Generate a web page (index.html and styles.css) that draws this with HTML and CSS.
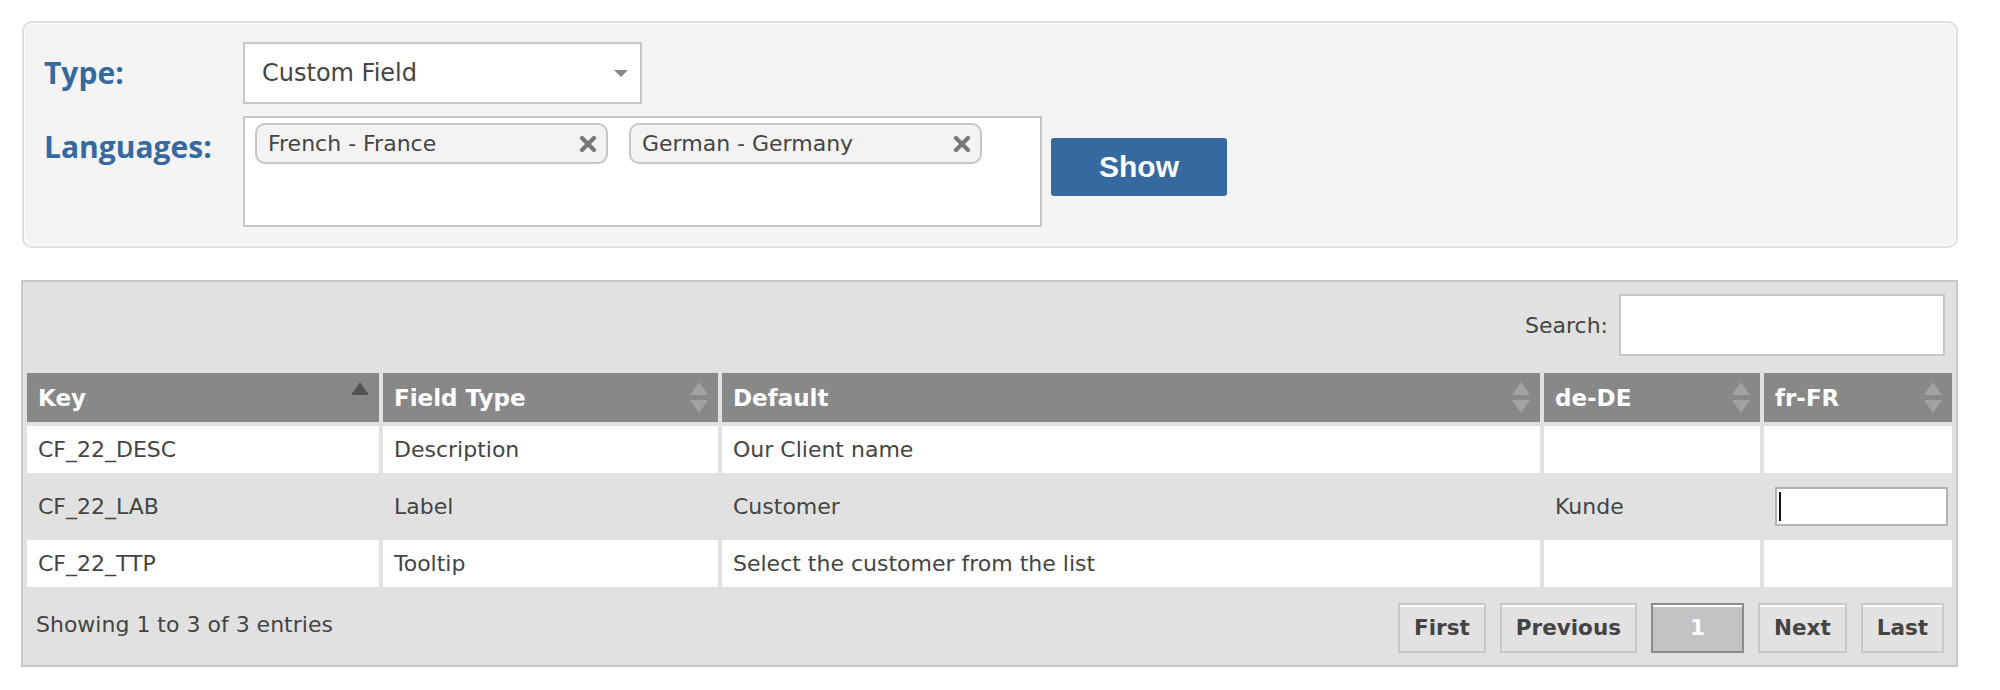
FILE: index.html
```html
<!DOCTYPE html>
<html>
<head>
<meta charset="utf-8">
<title>Translations</title>
<link rel="stylesheet" href="styles.css">
</head>
<body>
<div class="page">
  <div class="filter-panel">
    <div class="form-row">
      <div class="form-label">Type:</div>
      <div class="select-box"><span class="select-value">Custom Field</span><span class="select-arrow"></span></div>
    </div>
    <div class="form-row">
      <div class="form-label">Languages:</div>
      <div class="multi-box">
        <div class="tag"><span class="tag-text">French - France</span><svg class="tag-x" width="18" height="18" viewBox="0 0 18 18"><path d="M3 3 L15 15 M15 3 L3 15" stroke="#777" stroke-width="4.2" stroke-linecap="round"/></svg></div>
        <div class="tag"><span class="tag-text">German - Germany</span><svg class="tag-x" width="18" height="18" viewBox="0 0 18 18"><path d="M3 3 L15 15 M15 3 L3 15" stroke="#777" stroke-width="4.2" stroke-linecap="round"/></svg></div>
      </div>
      <button class="show-btn">Show</button>
    </div>
  </div>

  <div class="table-panel">
    <div class="search-row">
      <label class="search-label">Search:</label>
      <input class="search-input" type="text">
    </div>
    <table class="data-table">
      <colgroup>
        <col class="c-key"><col class="c-type"><col class="c-default"><col class="c-de"><col class="c-fr">
      </colgroup>
      <thead>
        <tr>
          <th><div class="th-inner"><span>Key</span><svg class="sort" width="18" height="31" viewBox="0 0 18 31"><path d="M0 13 L9 0 L18 13 Z" fill="#555"/></svg></div></th>
          <th><div class="th-inner"><span>Field Type</span><svg class="sort" width="18" height="31" viewBox="0 0 18 31"><path d="M0 13 L9 0 L18 13 Z M0 18 L18 18 L9 31 Z" fill="#a2a2a2"/></svg></div></th>
          <th><div class="th-inner"><span>Default</span><svg class="sort" width="18" height="31" viewBox="0 0 18 31"><path d="M0 13 L9 0 L18 13 Z M0 18 L18 18 L9 31 Z" fill="#a2a2a2"/></svg></div></th>
          <th><div class="th-inner"><span>de-DE</span><svg class="sort" width="18" height="31" viewBox="0 0 18 31"><path d="M0 13 L9 0 L18 13 Z M0 18 L18 18 L9 31 Z" fill="#a2a2a2"/></svg></div></th>
          <th><div class="th-inner"><span>fr-FR</span><svg class="sort" width="18" height="31" viewBox="0 0 18 31"><path d="M0 13 L9 0 L18 13 Z M0 18 L18 18 L9 31 Z" fill="#a2a2a2"/></svg></div></th>
        </tr>
      </thead>
      <tbody>
        <tr class="odd">
          <td>CF_22_DESC</td><td>Description</td><td>Our Client name</td><td></td><td></td>
        </tr>
        <tr class="even">
          <td>CF_22_LAB</td><td>Label</td><td>Customer</td><td>Kunde</td><td><div class="edit-box"><span class="caret"></span></div></td>
        </tr>
        <tr class="odd">
          <td>CF_22_TTP</td><td>Tooltip</td><td>Select the customer from the list</td><td></td><td></td>
        </tr>
      </tbody>
    </table>
    <div class="table-footer">
      <div class="info">Showing 1 to 3 of 3 entries</div>
      <div class="paging">
        <span class="page-btn">First</span>
        <span class="page-btn">Previous</span>
        <span class="page-btn current">1</span>
        <span class="page-btn">Next</span>
        <span class="page-btn">Last</span>
      </div>
    </div>
  </div>
</div>
</body>
</html>
```
FILE: styles.css
```css
* { box-sizing: border-box; }
html, body { margin: 0; padding: 0; background: #fff; }
body { font-family: "DejaVu Sans", Verdana, sans-serif; color: #444; }

.page { width: 1937px; margin-left: 21px; padding-top: 21px; }

.filter-panel {
  margin-left: 1px;
  background: #f4f4f4;
  border: 2px solid #dedede;
  border-radius: 10px;
  box-shadow: inset 0 0 0 1px #fff;
  padding: 19px 20px;
  display: flex;
  flex-direction: column;
  gap: 12px;
}
.form-row { display: flex; align-items: flex-start; }
.form-label {
  width: 199px;
  font-family: "Open Sans", sans-serif;
  font-weight: 700;
  font-size: 30px;
  line-height: 62px;
  color: #35699f;
}
.select-box {
  width: 399px;
  height: 62px;
  background: #fff;
  border: 2px solid #c6c6c6;
  padding: 0 12px 0 17px;
  display: flex;
  align-items: center;
  justify-content: space-between;
  font-size: 24px;
  color: #444;
}
.select-arrow {
  width: 0; height: 0;
  border-left: 7px solid transparent;
  border-right: 7px solid transparent;
  border-top: 7px solid #888;
}
.multi-box {
  width: 799px;
  height: 111px;
  background: #fff;
  border: 2px solid #c6c6c6;
  padding: 5px 10px;
  display: flex;
  align-items: flex-start;
  gap: 21px;
}
.tag {
  width: 353px;
  height: 41px;
  background: #f3f3f3;
  border: 2px solid #c6c6c6;
  border-radius: 10px;
  padding: 0 9px 0 11px;
  display: flex;
  align-items: center;
  justify-content: space-between;
  font-size: 22px;
  color: #444;
}
.tag-x { display: block; }
.show-btn {
  margin-left: 9px;
  margin-top: 22px;
  width: 176px;
  height: 58px;
  background: #35699f;
  border: none;
  border-radius: 3px;
  color: #fff;
  font-family: "Liberation Sans", Arial, sans-serif;
  font-weight: 700;
  font-size: 30px;
  padding: 0;
}

.table-panel {
  margin-top: 32px;
  background: #e1e1e1;
  border: 2px solid #c8c8c8;
}
.search-row {
  display: flex;
  justify-content: flex-end;
  align-items: center;
  gap: 11px;
  padding: 12px 11px 0 0;
}
.search-label { font-size: 22px; color: #444; }
.search-input {
  width: 326px;
  height: 62px;
  border: 2px solid #c8c8c8;
  background: #fff;
  margin: 0;
  font-size: 22px;
  outline: none;
}
.data-table {
  margin-top: 13px;
  width: 1933px;
  table-layout: fixed;
  border-collapse: separate;
  border-spacing: 4px;
}
.c-key { width: 352px; }
.c-type { width: 335px; }
.c-default { width: 818px; }
.c-de { width: 216px; }
.c-fr { width: 188px; }
.data-table th {
  background: #888;
  color: #fff;
  font-weight: 700;
  font-size: 23px;
  text-align: left;
  padding: 9px 10px 9px 11px;
}
.th-inner {
  display: flex;
  justify-content: space-between;
  align-items: center;
  height: 31px;
}
.sort { display: block; flex: none; }
.data-table td {
  font-size: 22px;
  line-height: 27px;
  padding: 10px 11px;
  color: #444;
}
.data-table tr.odd td { background: #fff; }
.data-table tr.even td { background: transparent; }
.edit-box {
  width: 173px;
  height: 39px;
  border: 2px solid #b2b2b2;
  background: #fff;
  display: flex;
  align-items: center;
  padding-left: 2px;
}
.caret { width: 2px; height: 29px; background: #111; }

.table-footer {
  display: flex;
  justify-content: space-between;
  align-items: center;
  padding: 12px 12px 12px 13px;
}
.info { font-size: 22px; color: #444; margin-bottom: 7px; }
.paging { display: flex; gap: 14px; }
.page-btn {
  height: 50px;
  border: 2px solid #c8c8c8;
  background: #e2e2e2;
  box-shadow: inset 0 2px 0 #fff;
  padding: 0 14px;
  font-weight: 700;
  font-size: 21.5px;
  line-height: 46px;
  color: #444;
}
.page-btn.current {
  background: #c3c3c3;
  border-color: #8c8c8c;
  color: #fff;
  padding: 0 37px;
}
```
